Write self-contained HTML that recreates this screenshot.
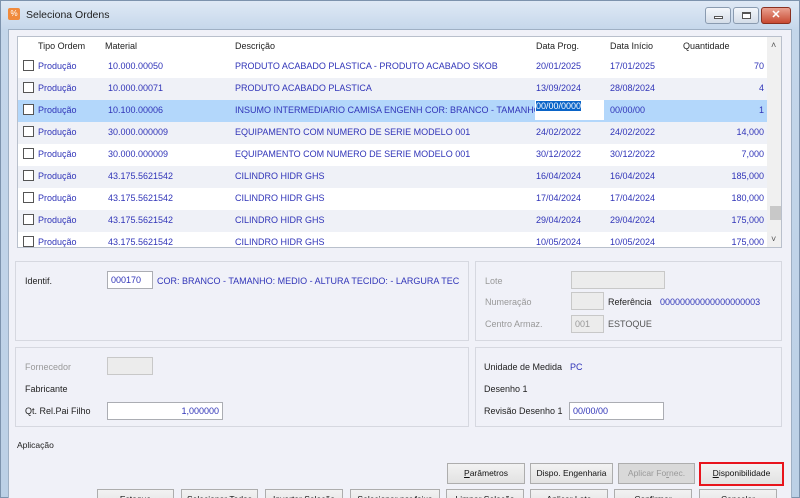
<!DOCTYPE html>
<html style="width:800px;height:498px;overflow:hidden"><head><meta charset="utf-8"><style>
*{box-sizing:border-box;margin:0;padding:0}
body{width:800px;height:498px;overflow:hidden;font-family:"Liberation Sans",sans-serif;font-size:9px;background:#c9d9ea;position:relative}
.abs{position:absolute}
.win{left:0;top:0;width:800px;height:498px;background:linear-gradient(#dfe9f5,#c4d6ea 30px,#bcd0e6);border:1px solid #7d93ad}
.client{left:8px;top:29px;width:784px;height:469px;background:#f0f1f8;border:1px solid #9fb0c4;border-bottom:none}
.title{left:26px;top:9px;font-size:10.5px;color:#1e1e1e}
.tbtn{top:7px;height:17px;border:1px solid #8a9bb0;border-radius:3px;background:linear-gradient(#f4f7fb,#d4dde8)}
.grid{left:17px;top:36px;width:765px;height:212px;background:#fff;border:1px solid #b9c0cc;overflow:hidden}
.row{position:absolute;left:0;width:749px;height:22px;color:#3034b8}
.row span{position:absolute;top:5px;white-space:nowrap}
.cb{position:absolute;left:5px;top:4px;width:11px;height:11px;border:1px solid #555;background:#fff}
.hdr{position:absolute;top:4px;color:#222}
.panel{border:1px solid #d6d8e0;background:#f0f1f8}
.lbl{position:absolute;color:#222;white-space:nowrap}
.dis{color:#999}
.blue{color:#3034b8}
.inp{position:absolute;background:#fff;border:1px solid #abadb3;height:18px;padding:3px 3px;color:#3034b8}
.inpd{position:absolute;background:#ececec;border:1px solid #c8c8c8;height:18px;padding:3px 3px;color:#999}
.btn{position:absolute;height:21px;border:1px solid #adadad;background:linear-gradient(#f2f2f2,#e2e2e2);text-align:center;line-height:19px;color:#111;font-size:8.5px;white-space:nowrap;overflow:hidden}
</style></head><body>
<div class="abs win"></div>
<div class="abs" style="left:8px;top:8px;width:12px;height:12px;background:#f08a3c;border-radius:2px;color:#fff;font-size:8px;text-align:center;line-height:12px">%</div>
<div class="abs title">Seleciona Ordens</div>
<div class="abs tbtn" style="left:705px;width:26px"><div class="abs" style="left:8px;top:8px;width:9px;height:3px;border:1px solid #555;background:#fff"></div></div>
<div class="abs tbtn" style="left:733px;width:26px"><div class="abs" style="left:8px;top:4px;width:9px;height:7px;border:1px solid #555;border-top-width:2px;background:#fff"></div></div>
<div class="abs tbtn" style="left:761px;width:30px;background:linear-gradient(#e9a08f,#c84a32);border-color:#8a3020;color:#fff;font-weight:bold;text-align:center;line-height:15px;font-size:11px">✕</div>
<div class="abs client"></div>

<div class="abs grid">
 <div class="hdr" style="left:20px">Tipo Ordem</div>
 <div class="hdr" style="left:87px">Material</div>
 <div class="hdr" style="left:217px">Descrição</div>
 <div class="hdr" style="left:518px">Data Prog.</div>
 <div class="hdr" style="left:592px">Data Início</div>
 <div class="hdr" style="left:665px">Quantidade</div>
 <div class="abs" style="left:749px;top:0;width:15px;height:210px;background:#f0f0f0"></div>
 <div class="abs" style="left:753px;top:3px;color:#555;font-size:9px">˄</div>
 <div class="abs" style="left:752px;top:169px;width:11px;height:14px;background:#c8c8c8"></div>
 <div class="abs" style="left:753px;top:197px;color:#555;font-size:9px">˅</div>

 <div class="row" style="top:19px;background:#fff"><div class="cb"></div><span style="left:20px">Produção</span><span style="left:90px">10.000.00050</span><span style="left:217px">PRODUTO ACABADO PLASTICA - PRODUTO ACABADO SKOB</span><span style="left:518px">20/01/2025</span><span style="left:592px">17/01/2025</span><span style="right:3px">70</span></div>
 <div class="row" style="top:41px;background:#eff1f7"><div class="cb"></div><span style="left:20px">Produção</span><span style="left:90px">10.000.00071</span><span style="left:217px">PRODUTO ACABADO PLASTICA</span><span style="left:518px">13/09/2024</span><span style="left:592px">28/08/2024</span><span style="right:3px">4</span></div>
 <div class="row" style="top:63px;background:#b3d7fb"><div class="cb"></div><span style="left:20px">Produção</span><span style="left:90px">10.100.00006</span><span style="left:217px">INSUMO INTERMEDIARIO CAMISA ENGENH COR: BRANCO - TAMANHO</span><span style="left:517px;top:0;width:69px;height:20px;background:#fff"></span><span style="left:518px;top:1px;background:#0a64c8;color:#fff">00/00/0000</span><span style="left:592px">00/00/00</span><span style="right:3px">1</span></div>
 <div class="row" style="top:85px;background:#eff1f7"><div class="cb"></div><span style="left:20px">Produção</span><span style="left:90px">30.000.000009</span><span style="left:217px">EQUIPAMENTO COM NUMERO DE SERIE MODELO 001</span><span style="left:518px">24/02/2022</span><span style="left:592px">24/02/2022</span><span style="right:3px">14,000</span></div>
 <div class="row" style="top:107px;background:#fff"><div class="cb"></div><span style="left:20px">Produção</span><span style="left:90px">30.000.000009</span><span style="left:217px">EQUIPAMENTO COM NUMERO DE SERIE MODELO 001</span><span style="left:518px">30/12/2022</span><span style="left:592px">30/12/2022</span><span style="right:3px">7,000</span></div>
 <div class="row" style="top:129px;background:#eff1f7"><div class="cb"></div><span style="left:20px">Produção</span><span style="left:90px">43.175.5621542</span><span style="left:217px">CILINDRO HIDR GHS</span><span style="left:518px">16/04/2024</span><span style="left:592px">16/04/2024</span><span style="right:3px">185,000</span></div>
 <div class="row" style="top:151px;background:#fff"><div class="cb"></div><span style="left:20px">Produção</span><span style="left:90px">43.175.5621542</span><span style="left:217px">CILINDRO HIDR GHS</span><span style="left:518px">17/04/2024</span><span style="left:592px">17/04/2024</span><span style="right:3px">180,000</span></div>
 <div class="row" style="top:173px;background:#eff1f7"><div class="cb"></div><span style="left:20px">Produção</span><span style="left:90px">43.175.5621542</span><span style="left:217px">CILINDRO HIDR GHS</span><span style="left:518px">29/04/2024</span><span style="left:592px">29/04/2024</span><span style="right:3px">175,000</span></div>
 <div class="row" style="top:195px;background:#fff"><div class="cb"></div><span style="left:20px">Produção</span><span style="left:90px">43.175.5621542</span><span style="left:217px">CILINDRO HIDR GHS</span><span style="left:518px">10/05/2024</span><span style="left:592px">10/05/2024</span><span style="right:3px">175,000</span></div>
</div>

<div class="abs panel" style="left:15px;top:261px;width:454px;height:80px"></div>
<div class="abs panel" style="left:475px;top:261px;width:307px;height:80px"></div>
<div class="abs panel" style="left:15px;top:347px;width:454px;height:80px"></div>
<div class="abs panel" style="left:475px;top:347px;width:307px;height:80px"></div>

<div class="lbl" style="left:25px;top:276px">Identif.</div>
<div class="inp" style="left:107px;top:271px;width:46px">000170</div>
<div class="lbl blue" style="left:157px;top:276px">COR: BRANCO - TAMANHO: MEDIO - ALTURA TECIDO: - LARGURA TEC</div>

<div class="lbl dis" style="left:25px;top:362px">Fornecedor</div>
<div class="inpd" style="left:107px;top:357px;width:46px"></div>
<div class="lbl" style="left:25px;top:384px">Fabricante</div>
<div class="lbl" style="left:25px;top:406px">Qt. Rel.Pai Filho</div>
<div class="inp" style="left:107px;top:402px;width:116px;text-align:right">1,000000</div>

<div class="lbl dis" style="left:485px;top:276px">Lote</div>
<div class="inpd" style="left:571px;top:271px;width:94px"></div>
<div class="lbl dis" style="left:485px;top:297px">Numeração</div>
<div class="inpd" style="left:571px;top:292px;width:33px"></div>
<div class="lbl" style="left:608px;top:297px">Referência</div>
<div class="lbl blue" style="left:660px;top:297px">00000000000000000003</div>
<div class="lbl dis" style="left:485px;top:319px">Centro Armaz.</div>
<div class="inpd" style="left:571px;top:315px;width:33px">001</div>
<div class="lbl" style="left:608px;top:319px;color:#555">ESTOQUE</div>

<div class="lbl" style="left:484px;top:362px">Unidade de Medida</div>
<div class="lbl blue" style="left:570px;top:362px">PC</div>
<div class="lbl" style="left:484px;top:384px">Desenho 1</div>
<div class="lbl" style="left:484px;top:406px">Revisão Desenho 1</div>
<div class="inp" style="left:569px;top:402px;width:95px">00/00/00</div>

<div class="lbl" style="left:17px;top:440px;font-size:8.5px">Aplicação</div>

<div class="btn" style="left:447px;top:463px;width:78px"><u>P</u>arâmetros</div>
<div class="btn" style="left:530px;top:463px;width:83px">Dispo. En<u>g</u>enharia</div>
<div class="btn" style="left:618px;top:463px;width:77px;background:#d9d9d9;color:#999">Aplicar Fo<u>r</u>nec.</div>
<div class="btn" style="left:699px;top:462px;width:85px;height:24px;border:2px solid #e8141c;line-height:19px"><u>D</u>isponibilidade</div>

<div class="btn" style="left:97px;top:489px;width:77px">Estoque</div>
<div class="btn" style="left:181px;top:489px;width:77px">Selecionar Todos</div>
<div class="btn" style="left:265px;top:489px;width:78px">Inverter Seleção</div>
<div class="btn" style="left:350px;top:489px;width:90px">Selecionar por faixa</div>
<div class="btn" style="left:446px;top:489px;width:78px">Limpar Seleção</div>
<div class="btn" style="left:530px;top:489px;width:78px">Aplicar Lote</div>
<div class="btn" style="left:614px;top:489px;width:78px">Confirmar</div>
<div class="btn" style="left:699px;top:489px;width:78px">Cancelar</div>
</body></html>
